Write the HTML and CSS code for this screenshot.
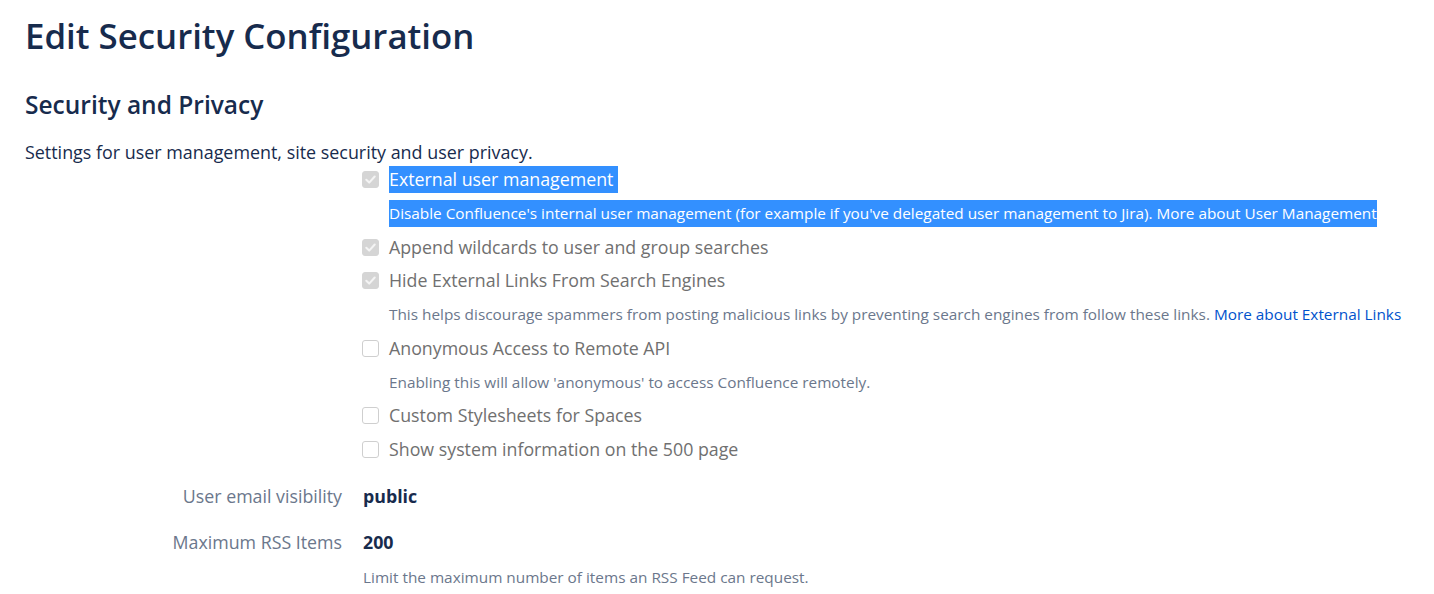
FILE: index.html
```html
<!DOCTYPE html>
<html lang="en">
<head>
<meta charset="utf-8">
<title>Edit Security Configuration</title>
<link rel="stylesheet" href="styles.css">
</head>
<body>
<main class="page">
  <h1 class="title">Edit Security Configuration</h1>
  <h2 class="subtitle">Security and Privacy</h2>
  <p class="intro">Settings for user management, site security and user privacy.</p>

  <div class="form">
    <div class="checks">
      <div class="check">
        <span class="box checked"><svg viewBox="0 0 16 16"><path d="M3.5 8.3 L6.6 11.3 L12.5 4.8" /></svg></span>
        <div class="check-body">
          <div class="line"><span class="label sel">External user management&nbsp;</span></div>
          <div class="line"><span class="desc sel">Disable Confluence's internal user management (for example if you've delegated user management to Jira). More about User Management</span></div>
        </div>
      </div>
      <div class="check">
        <span class="box checked"><svg viewBox="0 0 16 16"><path d="M3.5 8.3 L6.6 11.3 L12.5 4.8" /></svg></span>
        <div class="check-body">
          <div class="line"><span class="label">Append wildcards to user and group searches</span></div>
        </div>
      </div>
      <div class="check">
        <span class="box checked"><svg viewBox="0 0 16 16"><path d="M3.5 8.3 L6.6 11.3 L12.5 4.8" /></svg></span>
        <div class="check-body">
          <div class="line"><span class="label">Hide External Links From Search Engines</span></div>
          <div class="line"><span class="desc">This helps discourage spammers from posting malicious links by preventing search engines from follow these links. <a class="link" href="#">More about External Links</a></span></div>
        </div>
      </div>
      <div class="check">
        <span class="box"></span>
        <div class="check-body">
          <div class="line"><span class="label">Anonymous Access to Remote API</span></div>
          <div class="line"><span class="desc">Enabling this will allow 'anonymous' to access Confluence remotely.</span></div>
        </div>
      </div>
      <div class="check">
        <span class="box"></span>
        <div class="check-body">
          <div class="line"><span class="label">Custom Stylesheets for Spaces</span></div>
        </div>
      </div>
      <div class="check">
        <span class="box"></span>
        <div class="check-body">
          <div class="line"><span class="label">Show system information on the 500 page</span></div>
        </div>
      </div>
    </div>

    <div class="field field-email">
      <div class="field-label">User email visibility</div>
      <div class="field-value">public</div>
    </div>
    <div class="field field-rss">
      <div class="field-label">Maximum RSS Items</div>
      <div class="field-main">
        <div class="field-value">200</div>
        <div class="line"><span class="desc">Limit the maximum number of items an RSS Feed can request.</span></div>
      </div>
    </div>
  </div>
</main>
</body>
</html>
```

FILE: styles.css
```css
* { box-sizing: border-box; }
html, body { margin: 0; padding: 0; background: #ffffff; }
body {
  font-family: "Open Sans", "Noto Sans", "Liberation Sans", sans-serif;
  color: #172b4d;
}
.page {
  padding: 0 25px;
}
.title {
  margin: 0;
  padding-top: 12px;
  font-size: 34.8px;
  line-height: 48px;
  font-weight: 600;
  color: #172b4d;
}
.subtitle {
  margin: 29px 0 0;
  font-size: 24.5px;
  line-height: 32px;
  font-weight: 600;
  color: #172b4d;
}
.intro {
  margin: 19px 0 0;
  font-size: 17.9px;
  line-height: 24px;
  color: #172b4d;
}
.form {
  display: flex;
  flex-direction: column;
}
.checks {
  display: flex;
  flex-direction: column;
  gap: 6.75px;
  padding-left: 337px;
  margin-top: 2px;
}
.check {
  display: flex;
  gap: 10px;
}
.check-body {
  display: flex;
  flex-direction: column;
  gap: 6.75px;
}
.line {
  height: 27px;
  line-height: 27px;
  white-space: nowrap;
}
.box {
  flex: none;
  width: 17px;
  height: 17px;
  margin-top: 5px;
  border-radius: 3px;
  border: 1px solid #cfcfcf;
  background: #ffffff;
  display: flex;
  align-items: center;
  justify-content: center;
}
.box.checked {
  background: #d5d5d5;
  border-color: #d5d5d5;
}
.box svg {
  width: 15px;
  height: 15px;
  fill: none;
  stroke: #f4f4f4;
  stroke-width: 2.2;
  stroke-linecap: round;
  stroke-linejoin: round;
}
.label {
  display: inline-block;
  font-size: 17.8px;
  color: #707070;
}
.desc {
  display: inline-block;
  font-size: 15.35px;
  color: #6b778c;
}
.sel {
  background: #3390ff;
  color: #ffffff;
}
.link {
  color: #0052cc;
  text-decoration: none;
}
.field {
  display: grid;
  grid-template-columns: 317px auto;
  column-gap: 21px;
}
.field-email { margin-top: 19.5px; }
.field-rss { margin-top: 19px; }
.field-label {
  text-align: right;
  font-size: 17.8px;
  line-height: 27px;
  color: #6b778c;
}
.field-value {
  font-size: 17.8px;
  line-height: 27px;
  font-weight: 700;
  color: #172b4d;
}
.field-main .line { margin-top: 8px; }
```
